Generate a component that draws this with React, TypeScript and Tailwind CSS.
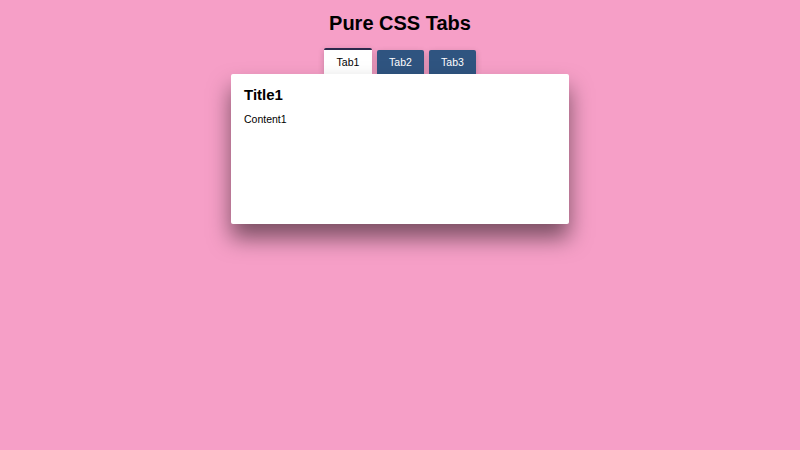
import { useState } from 'react'

const tabs = [
  { id: 'tab1', label: 'Tab1', title: 'Title1', content: 'Content1' },
  { id: 'tab2', label: 'Tab2', title: 'Title2', content: 'Content2' },
  { id: 'tab3', label: 'Tab3', title: 'Title3', content: 'Content3' },
]

export default function App() {
  const [active, setActive] = useState('tab1')
  const current = tabs.find((t) => t.id === active) ?? tabs[0]

  return (
    <div className="flex min-h-[450px] w-full flex-col items-center bg-[#f69fc7] font-['Liberation_Sans',Arial,sans-serif] text-black">
      <h1 className="mt-[11px] text-[20px] font-bold leading-[24px]">Pure CSS Tabs</h1>

      <div className="mt-[13px] flex h-[26px] items-end gap-[5px]">
        {tabs.map((tab) =>
          tab.id === active ? (
            <button
              key={tab.id}
              onClick={() => setActive(tab.id)}
              className="h-[26px] w-[48px] rounded-t-[2px] border-t-2 border-[#2b2a4c] bg-white text-[10.5px] leading-none text-black shadow-[0_2px_6px_rgba(0,0,0,0.2)]"
            >
              {tab.label}
            </button>
          ) : (
            <button
              key={tab.id}
              onClick={() => setActive(tab.id)}
              className="h-[24px] w-[47px] rounded-t-[2px] bg-[#2f5480] text-[10.5px] leading-none text-white shadow-[0_2px_6px_rgba(0,0,0,0.2)]"
            >
              {tab.label}
            </button>
          ),
        )}
      </div>

      <div className="relative h-[150px] w-[338px] rounded-[2px] bg-white px-[13px] pt-[12px] shadow-[0_14px_22px_rgba(0,0,0,0.5)]">
        <h2 className="text-[15px] font-bold leading-[18px]">{current.title}</h2>
        <p className="mt-[8px] text-[10.5px] leading-[14px]">{current.content}</p>
      </div>
    </div>
  )
}
